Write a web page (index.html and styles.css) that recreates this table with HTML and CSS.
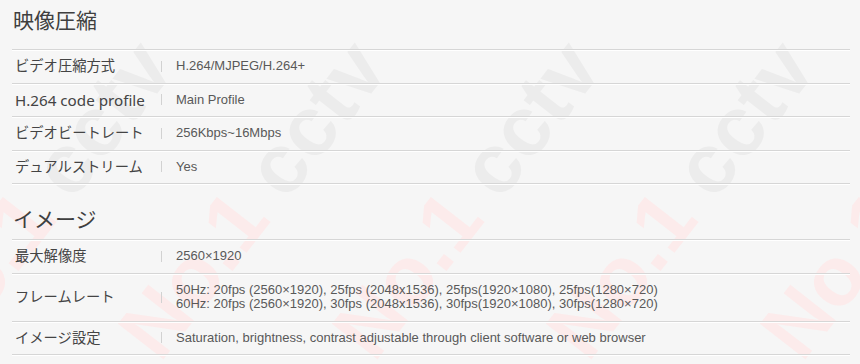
FILE: index.html
```html
<!DOCTYPE html>
<html lang="ja">
<head>
<meta charset="utf-8">
<title>仕様</title>
<link rel="stylesheet" href="styles.css">
</head>
<body>
<div class="page">
  <div class="watermark" aria-hidden="true">
    <span class="wm wm-1"><span class="wm-no">No.1</span> cctv</span>
    <span class="wm wm-2"><span class="wm-no">No.1</span> cctv</span>
    <span class="wm wm-3"><span class="wm-no">No.1</span> cctv</span>
    <span class="wm wm-4"><span class="wm-no">No.1</span> cctv</span>
    <span class="wm wm-5"><span class="wm-no">No.1</span> cctv</span>
  </div>
  <div class="content">
    <section class="spec">
      <h2 class="spec-title spec-title-first">映像圧縮</h2>
      <div class="spec-row"><div class="spec-label">ビデオ圧縮方式</div><span class="sep"></span><div class="spec-value">H.264/MJPEG/H.264+</div></div>
      <div class="spec-row"><div class="spec-label spec-label-latin">H.264 code profile</div><span class="sep"></span><div class="spec-value">Main Profile</div></div>
      <div class="spec-row"><div class="spec-label">ビデオビートレート</div><span class="sep"></span><div class="spec-value">256Kbps~16Mbps</div></div>
      <div class="spec-row"><div class="spec-label">デュアルストリーム</div><span class="sep"></span><div class="spec-value">Yes</div></div>
    </section>
    <section class="spec">
      <h2 class="spec-title spec-title-next">イメージ</h2>
      <div class="spec-row"><div class="spec-label">最大解像度</div><span class="sep"></span><div class="spec-value">2560×1920</div></div>
      <div class="spec-row spec-row-multi"><div class="spec-label">フレームレート</div><span class="sep"></span><div class="spec-value"><div class="spec-line">50Hz: 20fps (2560×1920), 25fps (2048x1536), 25fps(1920×1080), 25fps(1280×720)</div><div class="spec-line">60Hz: 20fps (2560×1920), 30fps (2048x1536), 30fps(1920×1080), 30fps(1280×720)</div></div></div>
      <div class="spec-row"><div class="spec-label">イメージ設定</div><span class="sep"></span><div class="spec-value">Saturation, brightness, contrast adjustable through client software or web browser</div></div>
    </section>
  </div>
</div>
</body>
</html>
```
FILE: styles.css
```css
html, body {
  margin: 0;
  padding: 0;
  background: #f6f6f6;
}

.page {
  position: relative;
  width: 860px;
  height: 364px;
  overflow: hidden;
  font-family: "Noto Sans", "Noto Sans CJK JP", sans-serif;
  color: #444;
}

.watermark {
  position: absolute;
  inset: 0;
  z-index: 0;
  pointer-events: none;
}

.wm {
  position: absolute;
  font-family: "Liberation Sans", Arial, sans-serif;
  font-weight: 700;
  font-size: 84px;
  line-height: 1;
  white-space: nowrap;
  color: #ececec;
  transform: rotate(-52deg);
  transform-origin: 0 0;
}

.wm-no {
  color: #fcebeb;
}

.wm-1 { left: -110px; top: 320px; }
.wm-2 { left: 104px; top: 320px; }
.wm-3 { left: 318px; top: 320px; }
.wm-4 { left: 532px; top: 320px; }
.wm-5 { left: 746px; top: 320px; }

.content {
  position: relative;
  z-index: 1;
  margin: 0 10px 0 12px;
}

.spec-title {
  margin: 0;
  font-weight: 400;
  font-size: 21px;
  line-height: 30px;
  color: #3f3f3f;
  padding-left: 1px;
  border-bottom: 1px solid #d6d6d6;
  box-shadow: 0 1px 0 #fff;
}

.spec-title-first {
  padding-top: 5px;
  padding-bottom: 14px;
}

.spec-title-next {
  padding-top: 20px;
  padding-bottom: 5px;
}

.spec-row {
  box-sizing: border-box;
  min-height: 33.5px;
  display: flex;
  align-items: center;
  border-bottom: 1px solid #d6d6d6;
  box-shadow: 0 1px 0 #fff;
}

.spec-row-multi {
  padding: 9.5px 0;
}

.spec-label {
  box-sizing: border-box;
  width: 149px;
  padding-left: 3px;
  font-size: 14.3px;
  line-height: 16px;
  color: #444;
  white-space: nowrap;
}

.spec-label-latin {
  font-size: 15.2px;
}

.sep {
  width: 1px;
  height: 11px;
  background: #d2d2d2;
  margin-right: 14px;
  flex: none;
}

.spec-value {
  font-family: "Liberation Sans", Arial, sans-serif;
  font-size: 13px;
  line-height: 14px;
  color: #595959;
  white-space: nowrap;
}

.spec-line {
  line-height: 14px;
}
```
